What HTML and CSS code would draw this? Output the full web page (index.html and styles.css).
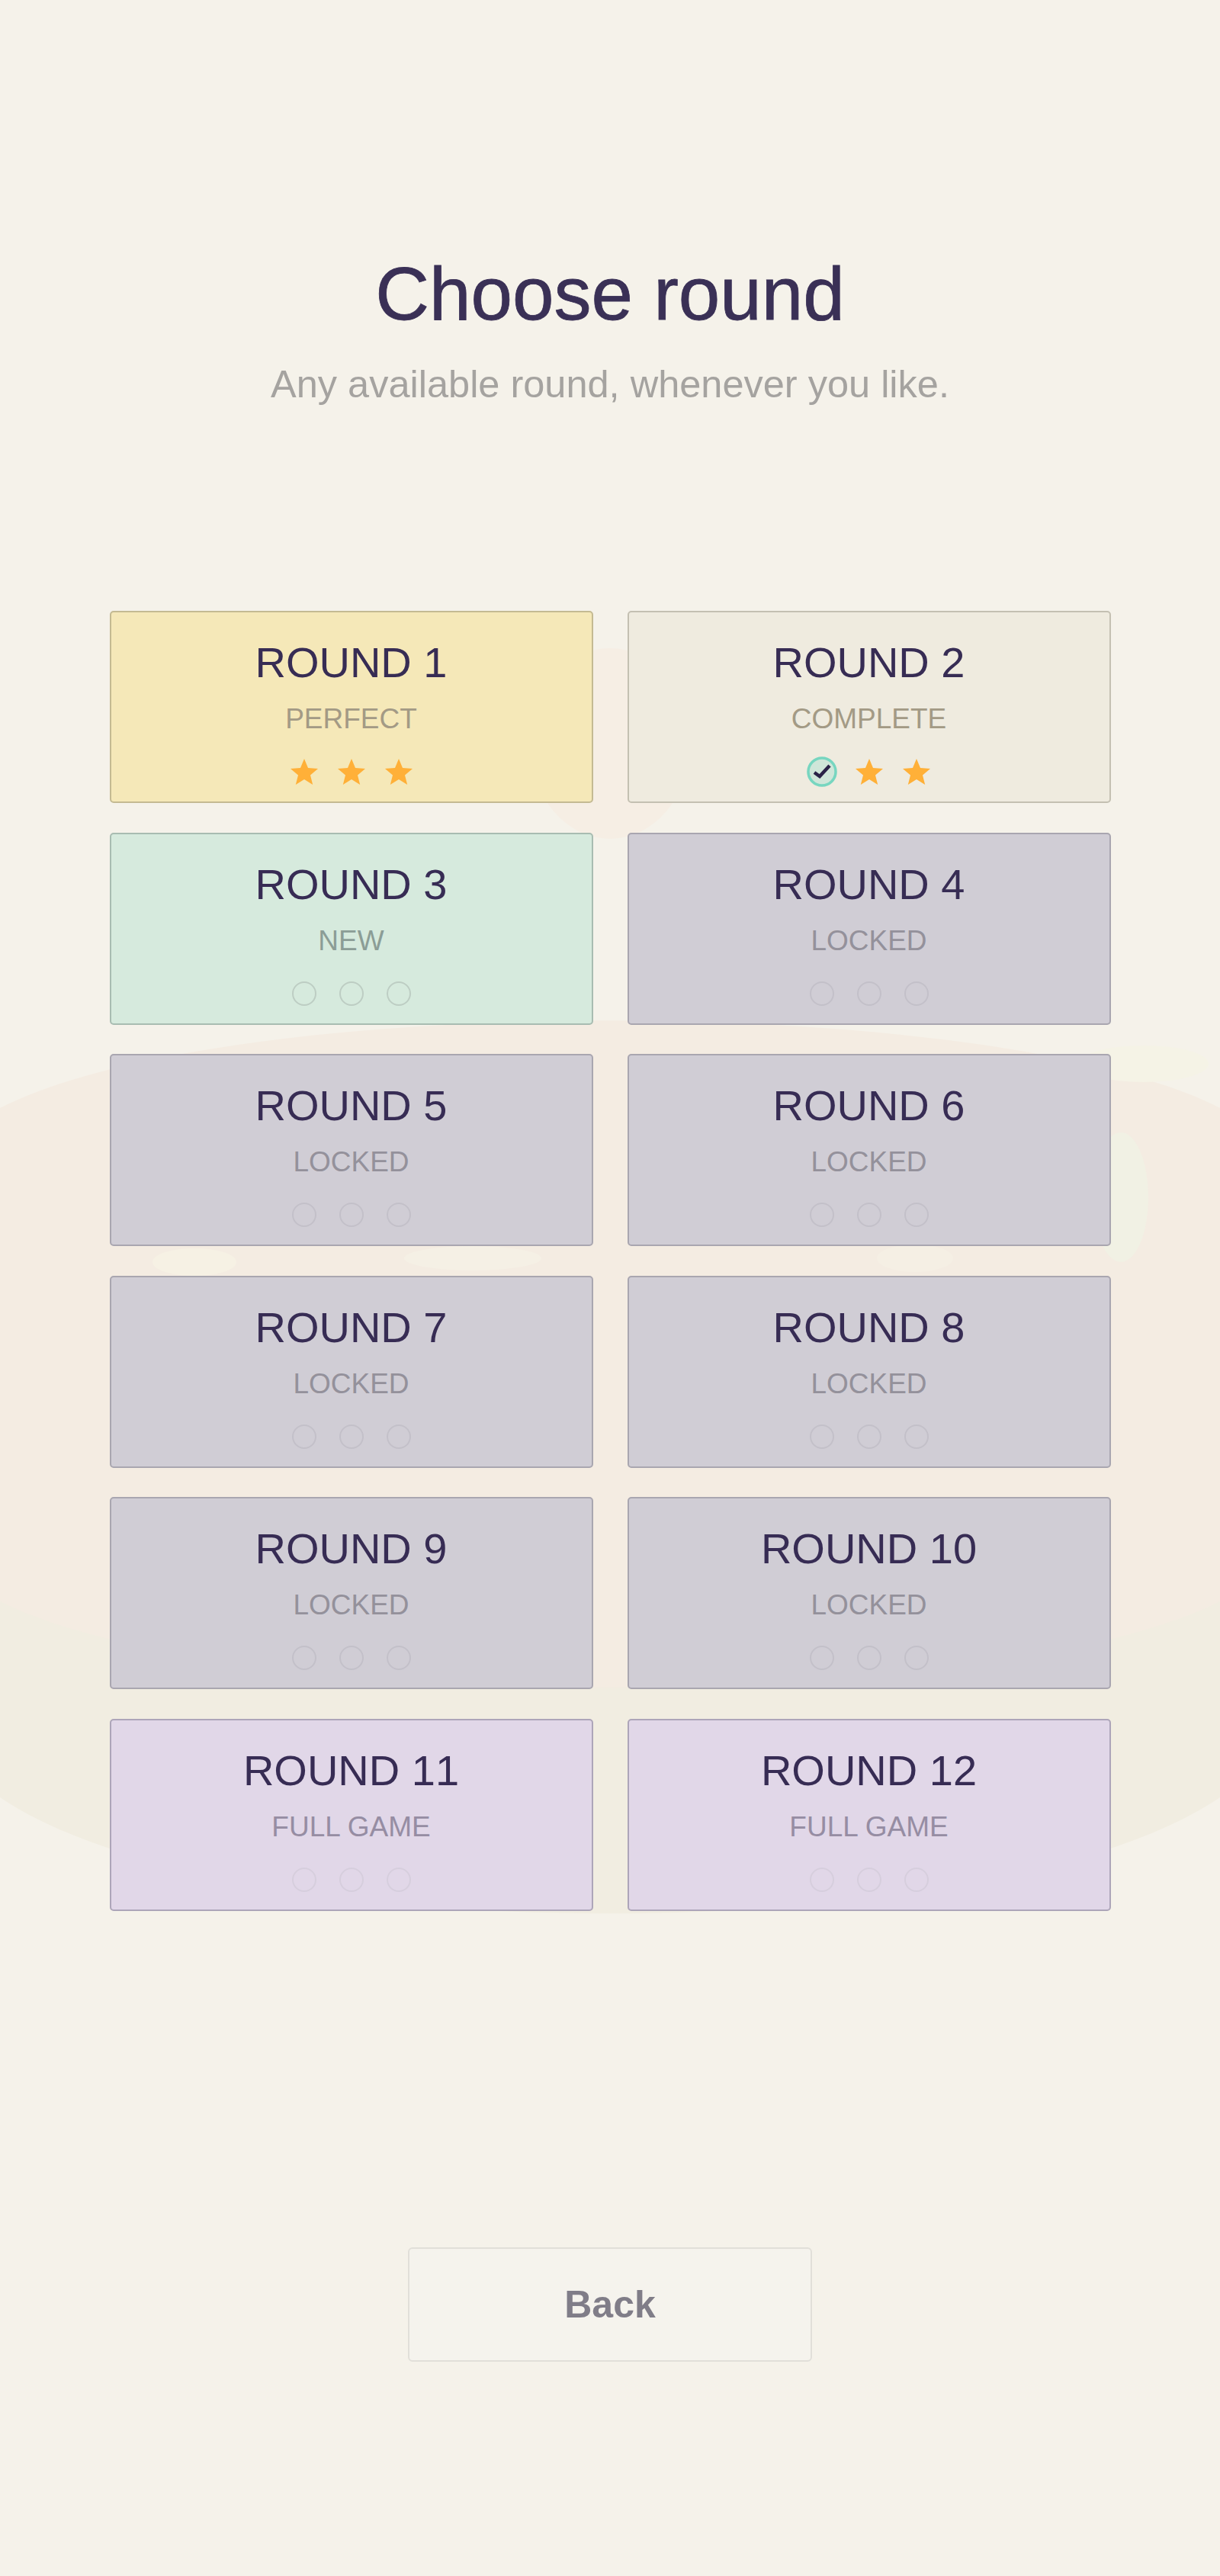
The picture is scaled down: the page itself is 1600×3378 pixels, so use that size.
FILE: index.html
```html
<!DOCTYPE html>
<html lang="en">
<head>
    <meta charset="UTF-8">
    <meta name="viewport" content="width=device-width, initial-scale=1.0">
    <title>Choose round</title>
    <link rel="stylesheet" href="styles.css">
</head>
<body>
    <!-- Faint scenery behind the page -->
    <svg class="scenery" viewBox="0 0 1600 3378" preserveAspectRatio="none" aria-hidden="true">
        <ellipse cx="800" cy="975" rx="105" ry="125" fill="#f6eee4"/>
        <path d="M0 2090C300 2230 1300 2230 1600 2090V2357C1300 2560 300 2560 0 2357z" fill="#f1ede1"/>
        <path d="M0 1453C300 1300 1300 1300 1600 1453V2100C1300 2250 300 2250 0 2100z" fill="#f4ece2"/>
        <ellipse cx="1500" cy="1395" rx="85" ry="24" fill="#f5f3e6"/>
        <ellipse cx="1470" cy="1570" rx="36" ry="85" fill="#f1f1e4"/>
        <ellipse cx="255" cy="1655" rx="55" ry="18" fill="#f6f1e4"/>
        <ellipse cx="620" cy="1650" rx="90" ry="16" fill="#f5f0e5"/>
        <ellipse cx="1200" cy="1650" rx="50" ry="18" fill="#f5efe4"/>
    </svg>

    <div class="screen">
        <header class="heading">
            <h1>Choose round</h1>
            <p>Any available round, whenever you like.</p>
        </header>

        <div class="rounds">
            <button class="round perfect">
                <span class="round-name">ROUND 1</span>
                <span class="round-state">PERFECT</span>
                <span class="marks">
                    <svg class="mark star" viewBox="0 0 36 36"><path d="M18 1l5 12 13 1-10 8.500 3.200 12.500L18 28l-11.200 7L10 22.500 0 14l13-1z"/></svg>
                    <svg class="mark star" viewBox="0 0 36 36"><path d="M18 1l5 12 13 1-10 8.500 3.200 12.500L18 28l-11.200 7L10 22.500 0 14l13-1z"/></svg>
                    <svg class="mark star" viewBox="0 0 36 36"><path d="M18 1l5 12 13 1-10 8.500 3.200 12.500L18 28l-11.200 7L10 22.500 0 14l13-1z"/></svg>
                </span>
            </button>
            <button class="round complete">
                <span class="round-name">ROUND 2</span>
                <span class="round-state">COMPLETE</span>
                <span class="marks">
                    <svg class="mark check" viewBox="0 0 40 40"><circle cx="20" cy="20" r="18"/><path d="M10 21l7 5 13-14"/></svg>
                    <svg class="mark star" viewBox="0 0 36 36"><path d="M18 1l5 12 13 1-10 8.500 3.200 12.500L18 28l-11.200 7L10 22.500 0 14l13-1z"/></svg>
                    <svg class="mark star" viewBox="0 0 36 36"><path d="M18 1l5 12 13 1-10 8.500 3.200 12.500L18 28l-11.200 7L10 22.500 0 14l13-1z"/></svg>
                </span>
            </button>
            <button class="round fresh">
                <span class="round-name">ROUND 3</span>
                <span class="round-state">NEW</span>
                <span class="marks"><i class="dot"></i><i class="dot"></i><i class="dot"></i></span>
            </button>
            <button class="round locked">
                <span class="round-name">ROUND 4</span>
                <span class="round-state">LOCKED</span>
                <span class="marks"><i class="dot"></i><i class="dot"></i><i class="dot"></i></span>
            </button>
            <button class="round locked">
                <span class="round-name">ROUND 5</span>
                <span class="round-state">LOCKED</span>
                <span class="marks"><i class="dot"></i><i class="dot"></i><i class="dot"></i></span>
            </button>
            <button class="round locked">
                <span class="round-name">ROUND 6</span>
                <span class="round-state">LOCKED</span>
                <span class="marks"><i class="dot"></i><i class="dot"></i><i class="dot"></i></span>
            </button>
            <button class="round locked">
                <span class="round-name">ROUND 7</span>
                <span class="round-state">LOCKED</span>
                <span class="marks"><i class="dot"></i><i class="dot"></i><i class="dot"></i></span>
            </button>
            <button class="round locked">
                <span class="round-name">ROUND 8</span>
                <span class="round-state">LOCKED</span>
                <span class="marks"><i class="dot"></i><i class="dot"></i><i class="dot"></i></span>
            </button>
            <button class="round locked">
                <span class="round-name">ROUND 9</span>
                <span class="round-state">LOCKED</span>
                <span class="marks"><i class="dot"></i><i class="dot"></i><i class="dot"></i></span>
            </button>
            <button class="round locked">
                <span class="round-name">ROUND 10</span>
                <span class="round-state">LOCKED</span>
                <span class="marks"><i class="dot"></i><i class="dot"></i><i class="dot"></i></span>
            </button>
            <button class="round full">
                <span class="round-name">ROUND 11</span>
                <span class="round-state">FULL GAME</span>
                <span class="marks"><i class="dot"></i><i class="dot"></i><i class="dot"></i></span>
            </button>
            <button class="round full">
                <span class="round-name">ROUND 12</span>
                <span class="round-state">FULL GAME</span>
                <span class="marks"><i class="dot"></i><i class="dot"></i><i class="dot"></i></span>
            </button>
        </div>

        <button class="back">Back</button>
    </div>
</body>
</html>
```

FILE: styles.css
```css
html, body {
    margin: 0;
    height: 100%;
}

body {
    position: relative;
    overflow: hidden;
    background-color: #f5f2ea;
    font-family: "Liberation Sans", Arial, sans-serif;
    color: #372c54;
}

.scenery {
    position: absolute;
    top: 0;
    left: 0;
    width: 100%;
    height: 100%;
}

.screen {
    position: relative;
    display: flex;
    flex-direction: column;
    align-items: center;
    padding-top: 326px;
}

.heading {
    text-align: center;
    height: 475px;
}

.heading h1 {
    margin: 0;
    font-size: 98px;
    font-weight: 400;
    line-height: 118px;
    -webkit-text-stroke: 0.8px #3a3056;
    color: #3a3056;
}

.heading p {
    margin: 30px 0 0;
    font-size: 50.500px;
    line-height: 60px;
    color: #a5a3a0;
}

.rounds {
    display: grid;
    grid-template-columns: 634px 634px;
    grid-auto-rows: 252px;
    gap: 38.500px 45px;
}

.round {
    display: flex;
    flex-direction: column;
    align-items: center;
    box-sizing: border-box;
    padding: 34px 0 0;
    border: 2px solid #b3ad97;
    border-radius: 5px;
    font-family: inherit;
    color: inherit;
}

.round-name {
    font-size: 56px;
    line-height: 64px;
    font-kerning: none;
}

.round-state {
    margin-top: 21px;
    font-size: 37px;
    line-height: 42px;
    color: #a39a85;
}

.marks {
    display: flex;
    gap: 26px;
    align-items: center;
    margin-top: 30px;
}

.mark {
    display: block;
    width: 36px;
    height: 36px;
}

.star path {
    fill: #ffb038;
}

.check {
    width: 40px;
    height: 40px;
    margin: -2px;
}

.check circle {
    fill: #cfe6d9;
    stroke: #77d6c0;
    stroke-width: 3.500;
}

.check path {
    fill: none;
    stroke: #2a2247;
    stroke-width: 4.500;
}

.dot {
    display: block;
    box-sizing: border-box;
    width: 32px;
    height: 32px;
    margin: 2px;
    border: 2px solid #bdcdc3;
    border-radius: 50%;
}

.perfect {
    background-color: #f5e8b8;
    border-color: #c4ba92;
}

.complete {
    background-color: #efebdf;
    border-color: #c4c0b2;
}

.fresh {
    background-color: #d6eadd;
    border-color: #a8bcb1;
}

.fresh .round-state {
    color: #8b9d96;
}

.locked {
    background-color: #d0cdd5;
    border-color: #a9a6b0;
}

.locked .round-state {
    color: #94919b;
}

.locked .dot {
    border-color: #c3c0c9;
}

.full {
    background-color: #e1d7e8;
    border-color: #ada5b9;
}

.full .round-state {
    color: #968da3;
}

.full .dot {
    border-color: #d6cedd;
}

.back {
    width: 530px;
    height: 150px;
    margin-top: 441px;
    padding: 0;
    background-color: #f5f3ed;
    border: 2px solid #e1dfd9;
    border-radius: 6px;
    font-family: inherit;
    font-size: 50px;
    font-weight: 700;
    color: #807d88;
}
```
